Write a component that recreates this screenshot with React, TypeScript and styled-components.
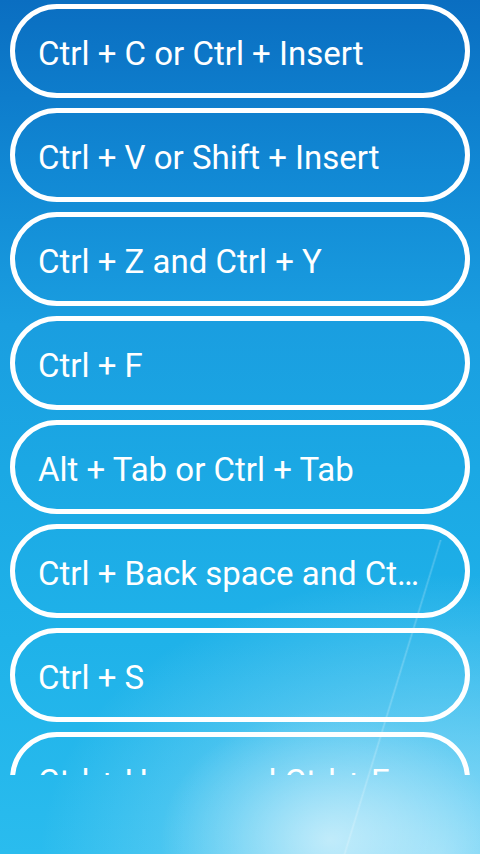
import React from 'react';
import styled, { createGlobalStyle } from 'styled-components';

const items = [
	'Ctrl + C or Ctrl + Insert',
	'Ctrl + V or Shift + Insert',
	'Ctrl + Z and Ctrl + Y',
	'Ctrl + F',
	'Alt + Tab or Ctrl + Tab',
	'Ctrl + Back space and Ctrl + Delete',
	'Ctrl + S',
	'Ctrl + Home and Ctrl + End',
];

export default function App() {
	return (
		<>
			<GlobalStyle />
			<Screen>
				<List>
					{items.map((item) => (
						<ShortcutButton key={item}>
							<Label>{item}</Label>
						</ShortcutButton>
					))}
				</List>
			</Screen>
		</>
	);
}

// Styled Components ...
const GlobalStyle = createGlobalStyle`
	html, body {
		margin: 0;
		padding: 0;
	}
	body {
		font-family: Roboto, 'Noto Sans', sans-serif;
	}
`;
const Screen = styled.div`
	width: 480px;
	height: 854px;
	overflow: hidden;
	background:
		linear-gradient(107deg, rgba(255, 255, 255, 0) 76.2%, rgba(255, 255, 255, 0.22) 76.5%, rgba(255, 255, 255, 0) 76.8%) 0 540px / 480px 314px no-repeat,
		radial-gradient(ellipse 170px 130px at 330px 840px, rgba(255, 255, 255, 0.55) 0, rgba(255, 255, 255, 0.2) 60%, rgba(255, 255, 255, 0) 100%),
		radial-gradient(ellipse 400px 280px at 440px 854px, rgba(215, 243, 255, 0.6) 0, rgba(215, 243, 255, 0) 100%),
		linear-gradient(180deg, #0a6ec1 0%, #1188d4 20%, #1a9ee0 38%, #1ba8e4 55%, #1fb2e9 75%, #2abcee 100%);
`;
const List = styled.div`
	height: 775px;
	overflow: hidden;
	box-sizing: border-box;
	padding: 4px 10px 0;
	display: flex;
	flex-direction: column;
	gap: 10px;
`;
const ShortcutButton = styled.div`
	flex: none;
	height: 94px;
	box-sizing: border-box;
	border: 5px solid #fff;
	border-radius: 47px;
	display: flex;
	align-items: center;
	padding: 4px 44px 0 23px;
	color: #fff;
`;
const Label = styled.span`
	font-size: 33px;
	white-space: nowrap;
	overflow: hidden;
	text-overflow: ellipsis;
`;
